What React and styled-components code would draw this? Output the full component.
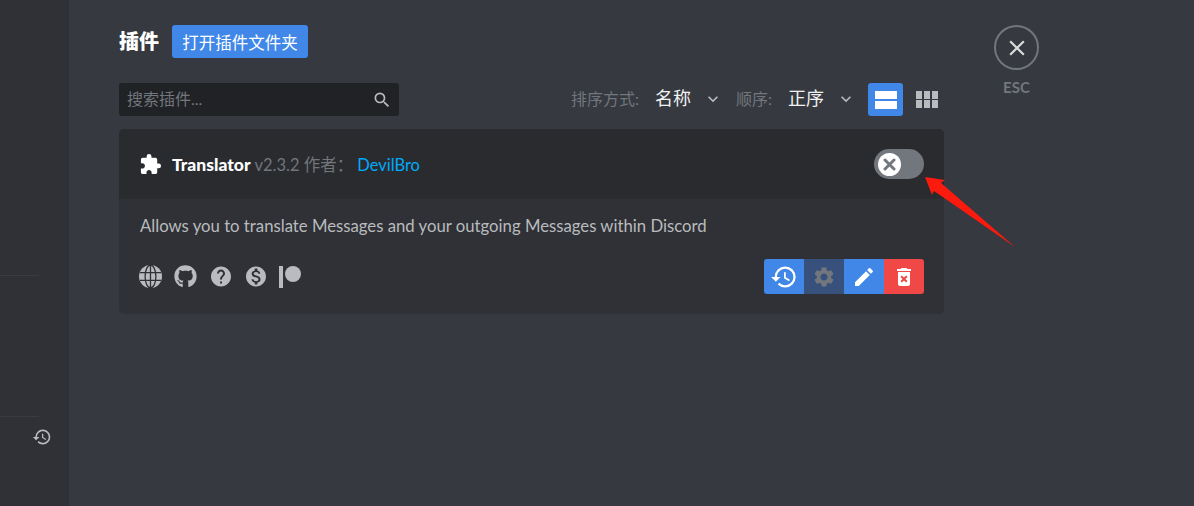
import React from 'react'
import styled, { createGlobalStyle } from 'styled-components'
import { FaGithub } from 'react-icons/fa'
import {
  MdHistory, MdSettings, MdEdit, MdDeleteForever, MdExtension, MdHelp,
  MdMonetizationOn, MdSearch, MdExpandMore, MdClose,
} from 'react-icons/md'

const fontStack = `Lato, "Noto Sans CJK SC", sans-serif`

const GlobalStyle = createGlobalStyle`
  html, body {
    margin: 0;
    height: 100%;
    background: #36393f;
    overflow: hidden;
  }
  #root {
    height: 100%;
  }
`

const Page = styled.div`
  position: relative;
  display: flex;
  height: 506px;
  font-family: ${fontStack};
  background: #36393f;
`

const Sidebar = styled.aside`
  width: 69px;
  flex: none;
  background: #2f3136;
  padding-top: 275px;
  box-sizing: border-box;
`

const SideRule = styled.div`
  width: 39px;
  height: 1px;
  background: #3a3c41;
  margin-bottom: ${props => props.gap}px;
`

const SideIcon = styled.div`
  display: flex;
  justify-content: flex-end;
  width: 52px;
  color: #b9bbbe;
  font-size: 20px;
  margin-top: 10px;
`

const Main = styled.main`
  display: flex;
  padding: 25px 0 0 50px;
`

const Content = styled.div`
  width: 825px;
`

const TitleRow = styled.div`
  display: flex;
  align-items: center;
  height: 33px;
  gap: 13px;
`

const Title = styled.h2`
  margin: 0;
  padding-bottom: 2px;
  font-size: 20px;
  font-weight: 900;
  color: #fff;
`

const OpenButton = styled.button`
  width: 136px;
  height: 33px;
  padding: 0;
  border: 0;
  border-radius: 3px;
  background: #4087e8;
  color: #fff;
  font-family: inherit;
  font-size: 16.5px;
`

const ToolRow = styled.div`
  display: flex;
  align-items: center;
  justify-content: space-between;
  margin-top: 25px;
  height: 33px;
`

const SearchBox = styled.div`
  display: flex;
  align-items: center;
  justify-content: space-between;
  width: 280px;
  height: 33px;
  box-sizing: border-box;
  padding: 0 7px 0 8px;
  border-radius: 3px;
  background: #202225;
  color: #72767d;
  font-size: 16px;
  > span {
    padding-bottom: 4px;
  }
  > svg {
    color: #b9bbbe;
    font-size: 20px;
  }
`

const Sorts = styled.div`
  display: flex;
  align-items: center;
`

const SortLabel = styled.span`
  color: #72767d;
  font-size: 16px;
  margin-right: 16px;
  padding-bottom: 4px;
`

const SortValue = styled.span`
  display: flex;
  align-items: center;
  color: #f0f1f2;
  font-size: 18px;
  margin-right: ${props => props.gap}px;
  padding-bottom: 2px;
  > span {
    padding-bottom: 4px;
  }
  > svg {
    margin-left: 12px;
    color: #b9bbbe;
    font-size: 20px;
  }
`

const ViewToggle = styled.div`
  display: flex;
  align-items: center;
  justify-content: center;
  width: 35px;
  height: 33px;
  border-radius: 3px;
  background: ${props => (props.active ? '#4087e8' : 'transparent')};
  margin-right: ${props => props.gap || 0}px;
`

const Card = styled.section`
  margin-top: 13px;
  height: 185px;
  border-radius: 5px;
  background: #2f3136;
  overflow: hidden;
`

const CardHeader = styled.header`
  display: flex;
  align-items: center;
  height: 70px;
  padding: 0 20px 0 20px;
  background: #292b2f;
  font-size: 16.5px;
  color: #72767d;
`

const PluginIcon = styled.div`
  display: flex;
  color: #fff;
  font-size: 23px;
  margin-right: 10px;
`

const Meta = styled.div`
  padding-bottom: 1px;
`

const PluginName = styled.span`
  color: #fff;
  font-size: 17.5px;
  font-weight: 900;
  margin-right: 4px;
`

const Author = styled.a`
  color: #00aaf8;
  margin-left: 4px;
`

const Toggle = styled.div`
  display: flex;
  align-items: center;
  width: 50px;
  height: 30px;
  margin-left: auto;
  padding-left: 4px;
  box-sizing: border-box;
  border-radius: 15px;
  background: #72767d;
`

const Knob = styled.div`
  display: flex;
  align-items: center;
  justify-content: center;
  width: 23px;
  height: 23px;
  border-radius: 50%;
  background: #fff;
  color: #72767d;
`

const Description = styled.p`
  margin: 0;
  padding: 17px 21px 0;
  height: 26px;
  line-height: 20px;
  font-size: 16.73px;
  color: #b9bbbe;
`

const Footer = styled.footer`
  display: flex;
  align-items: flex-start;
  justify-content: space-between;
  padding: 17px 20px 0 19px;
`

const Links = styled.div`
  display: flex;
  align-items: center;
  gap: 11px;
  height: 35px;
  color: #b9bbbe;
  > :nth-child(3) {
    margin-left: 1px;
  }
`

const LinkSlot = styled.div`
  display: flex;
  align-items: center;
  justify-content: center;
  width: 24px;
  height: 26px;
  font-size: ${props => props.size || 23}px;
`

const Actions = styled.div`
  display: flex;
  height: 35px;
  border-radius: 3px;
  overflow: hidden;
`

const ActionButton = styled.div`
  display: flex;
  align-items: center;
  justify-content: center;
  width: 40px;
  font-size: ${props => props.size || 24}px;
  background: ${props => props.bg};
  color: ${props => props.fg || '#fff'};
`

const CloseColumn = styled.div`
  display: flex;
  flex-direction: column;
  align-items: center;
  width: 45px;
  margin-left: 50px;
`

const CloseCircle = styled.div`
  display: flex;
  align-items: center;
  justify-content: center;
  width: 45px;
  height: 45px;
  box-sizing: border-box;
  border: 2px solid #72767d;
  border-radius: 50%;
  color: #dcddde;
  font-size: 26px;
`

const EscLabel = styled.div`
  margin-top: 8px;
  color: #72767d;
  font-size: 15px;
  font-weight: 700;
`

// annotation drawn on top of the screenshot
const Arrow = styled.svg`
  position: absolute;
  left: 920px;
  top: 170px;
`

const ListIcon = () => (
  <svg width="22" height="18" viewBox="0 0 22 18" fill="#fff">
    <rect x="0" y="0" width="22" height="8" />
    <rect x="0" y="10" width="22" height="8" />
  </svg>
)

const GridIcon = () => (
  <svg width="22" height="17" viewBox="0 0 22 17" fill="#b9bbbe">
    {[0, 8, 16].map(x => [0, 9].map(y => (
      <rect key={`${x}-${y}`} x={x} y={y} width="6" height="8" />
    )))}
  </svg>
)

const KnobCross = () => (
  <svg width="13" height="13" viewBox="0 0 13 13" stroke="currentColor" strokeWidth="3" strokeLinecap="round">
    <path d="M2 2 L11 11 M11 2 L2 11" />
  </svg>
)

const GlobeIcon = () => (
  <svg width="23" height="23" viewBox="0 0 23 23">
    <circle cx="11.5" cy="11.5" r="11.5" fill="currentColor" />
    <g fill="none" stroke="#2f3136" strokeWidth="1.3">
      <ellipse cx="11.5" cy="11.5" rx="5.4" ry="11.5" />
      <path d="M1 7.6 H22 M1 15.4 H22" />
      <path d="M11.5 0 V23" />
    </g>
  </svg>
)

const PatreonIcon = () => (
  <svg width="24" height="22" viewBox="0 0 24 22" fill="currentColor">
    <rect x="0" y="0" width="4" height="22" />
    <circle cx="14" cy="8" r="8" />
  </svg>
)

export default function App () {
  return (
    <Page>
      <GlobalStyle />
      <Sidebar>
        <SideRule gap={140} />
        <SideRule gap={0} />
        <SideIcon><MdHistory /></SideIcon>
      </Sidebar>
      <Main>
        <Content>
          <TitleRow>
            <Title>插件</Title>
            <OpenButton>打开插件文件夹</OpenButton>
          </TitleRow>
          <ToolRow>
            <SearchBox>
              <span>搜索插件...</span>
              <MdSearch />
            </SearchBox>
            <Sorts>
              <SortLabel>排序方式:</SortLabel>
              <SortValue gap={13}><span>名称</span><MdExpandMore /></SortValue>
              <SortLabel>顺序:</SortLabel>
              <SortValue gap={12}><span>正序</span><MdExpandMore /></SortValue>
              <ViewToggle active gap={6}><ListIcon /></ViewToggle>
              <ViewToggle><GridIcon /></ViewToggle>
            </Sorts>
          </ToolRow>
          <Card>
            <CardHeader>
              <PluginIcon><MdExtension /></PluginIcon>
              <Meta>
                <PluginName>Translator</PluginName>
                v2.3.2 作者：
                <Author>DevilBro</Author>
              </Meta>
              <Toggle><Knob><KnobCross /></Knob></Toggle>
            </CardHeader>
            <Description>Allows you to translate Messages and your outgoing Messages within Discord</Description>
            <Footer>
              <Links>
                <LinkSlot><GlobeIcon /></LinkSlot>
                <LinkSlot><FaGithub /></LinkSlot>
                <LinkSlot size={27}><MdHelp /></LinkSlot>
                <LinkSlot size={27}><MdMonetizationOn /></LinkSlot>
                <LinkSlot><PatreonIcon /></LinkSlot>
              </Links>
              <Actions>
                <ActionButton bg="#4087e8" size={28}><MdHistory /></ActionButton>
                <ActionButton bg="#37517c" fg="#72767d"><MdSettings /></ActionButton>
                <ActionButton bg="#4087e8"><MdEdit /></ActionButton>
                <ActionButton bg="#f04747"><MdDeleteForever /></ActionButton>
              </Actions>
            </Footer>
          </Card>
        </Content>
        <CloseColumn>
          <CloseCircle><MdClose /></CloseCircle>
          <EscLabel>ESC</EscLabel>
        </CloseColumn>
      </Main>
      <Arrow width="100" height="82" viewBox="920 170 100 82">
        <polygon points="925,177 945,180 941,183 1015,247 934,191 932,195" fill="#fb1a0e" />
      </Arrow>
    </Page>
  )
}
